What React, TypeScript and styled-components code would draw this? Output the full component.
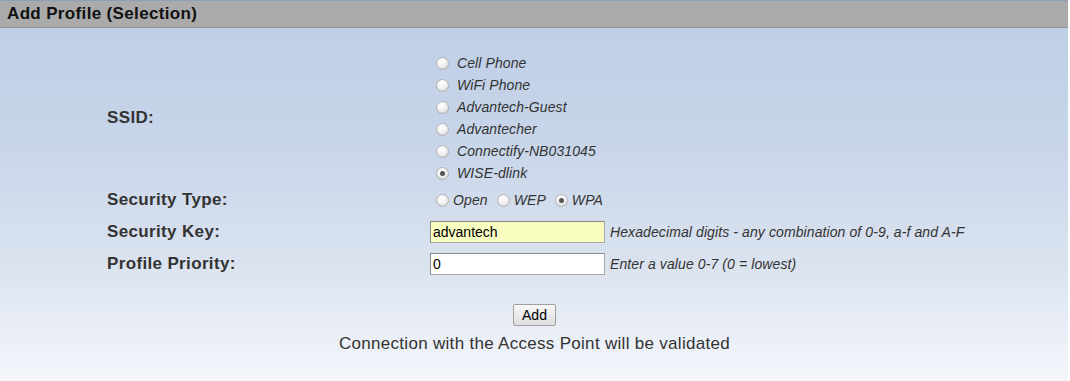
import React, {useState} from "react";
import styled, {createGlobalStyle} from "styled-components";

const ssids = [
    "Cell Phone",
    "WiFi Phone",
    "Advantech-Guest",
    "Advantecher",
    "Connectify-NB031045",
    "WISE-dlink",
];

const securityTypes = ["Open", "WEP", "WPA"];

const App: React.FC = () => {
    const [ssid, setSsid] = useState("WISE-dlink");
    const [security, setSecurity] = useState("WPA");
    const [key, setKey] = useState("advantech");
    const [priority, setPriority] = useState("0");

    return (
        <Page>
            <GlobalStyle/>
            <Header>Add Profile (Selection)</Header>
            <Body>
                <Form>
                    <Label>SSID:</Label>
                    <SsidList>
                        {ssids.map(name => (
                            <SsidItem key={name}>
                                <Radio
                                    type="radio"
                                    name="ssid"
                                    checked={ssid === name}
                                    onChange={() => setSsid(name)}
                                />
                                <OptionText>{name}</OptionText>
                            </SsidItem>
                        ))}
                    </SsidList>

                    <Label>Security Type:</Label>
                    <Cell $height={32}>
                        {securityTypes.map(type => (
                            <InlineOption key={type}>
                                <Radio
                                    type="radio"
                                    name="security"
                                    $inline
                                    checked={security === type}
                                    onChange={() => setSecurity(type)}
                                />
                                <OptionText>{type}</OptionText>
                            </InlineOption>
                        ))}
                    </Cell>

                    <Label>Security Key:</Label>
                    <Cell $height={32}>
                        <TextInput $highlight value={key} onChange={e => setKey(e.target.value)}/>
                        <Hint>Hexadecimal digits - any combination of 0-9, a-f and A-F</Hint>
                    </Cell>

                    <Label>Profile Priority:</Label>
                    <Cell $height={31}>
                        <TextInput value={priority} onChange={e => setPriority(e.target.value)}/>
                        <Hint>Enter a value 0-7 (0 = lowest)</Hint>
                    </Cell>
                </Form>

                <Footer>
                    <Button>Add</Button>
                    <Note>Connection with the Access Point will be validated</Note>
                </Footer>
            </Body>
        </Page>
    );
}

export default App;

const GlobalStyle = createGlobalStyle`
  html, body {
    margin: 0;
    padding: 0;
    background: #ffffff;
  }

  body {
    font-family: "Liberation Sans", Arial, sans-serif;
  }
`;

const Page = styled.div`
  width: 1068px;
  height: 381px;
  display: flex;
  flex-direction: column;
  background: linear-gradient(to bottom, #bccde5 0%, #c9d6ea 40%, #dbe3ef 70%, #f4f6fb 100%);
`;

const Header = styled.div`
  height: 26px;
  line-height: 26px;
  padding-left: 7px;
  background: #aaaaaa;
  border-top: 1px solid #8ea0b8;
  border-bottom: 1px solid #969696;
  font-size: 17px;
  letter-spacing: 0.35px;
  font-weight: bold;
  color: #111111;
`;

const Body = styled.div`
  flex: 1;
  display: flex;
  flex-direction: column;
  padding-top: 24px;
`;

const Form = styled.div`
  display: grid;
  grid-template-columns: 323px 1fr;
  padding-left: 107px;
  align-items: center;
`;

const Label = styled.div`
  font-size: 17px;
  letter-spacing: 0.35px;
  font-weight: bold;
  color: #333333;
`;

const SsidList = styled.div`
  display: flex;
  flex-direction: column;
`;

const SsidItem = styled.label`
  display: flex;
  align-items: center;
  height: 22px;
`;

const Cell = styled.div<{ $height: number }>`
  display: flex;
  align-items: center;
  height: ${p => p.$height}px;
`;

const InlineOption = styled.label`
  display: flex;
  align-items: center;
  margin-right: 3px;
`;

const Radio = styled.input<{ $inline?: boolean }>`
  appearance: none;
  width: 13px;
  height: 13px;
  margin: 0 ${p => p.$inline ? 4 : 8}px 0 6px;
  border-radius: 50%;
  border: 1px solid #b4b4b4;
  background: radial-gradient(circle at 40% 30%, #ffffff 0%, #f2f2f2 45%, #d6d6d6 100%);
  box-shadow: inset 0 -1px 1px rgba(0, 0, 0, 0.06);
  position: relative;
  flex-shrink: 0;

  &:checked::after {
    content: "";
    position: absolute;
    left: 3px;
    top: 3px;
    width: 5px;
    height: 5px;
    border-radius: 50%;
    background: #555555;
  }
`;

const OptionText = styled.span`
  font-size: 14px;
  letter-spacing: 0.1px;
  font-style: italic;
  color: #333333;
`;

const TextInput = styled.input<{ $highlight?: boolean }>`
  box-sizing: border-box;
  width: 175px;
  height: 22px;
  margin: 0;
  padding: 1px 2px;
  font-family: "Liberation Sans", Arial, sans-serif;
  font-size: 14px;
  color: #000000;
  background: ${p => p.$highlight ? "#fafdc0" : "#ffffff"};
  border: 1px solid #a9a9a9;
  border-top-color: #8a8a8a;
  border-left-color: #8a8a8a;
  border-radius: 0;
  outline: none;
`;

const Hint = styled.span`
  margin-left: 5px;
  font-size: 14px;
  letter-spacing: 0.1px;
  font-style: italic;
  color: #333333;
`;

const Footer = styled.div`
  display: flex;
  flex-direction: column;
  align-items: center;
  padding-top: 25px;
  padding-left: 1px;
`;

const Button = styled.button`
  width: 43px;
  height: 22px;
  padding: 0;
  font-family: "Liberation Sans", Arial, sans-serif;
  font-size: 14px;
  color: #000000;
  background: linear-gradient(to bottom, #f8f8f8, #dddddd);
  border: 1px solid #a0a0a0;
  border-radius: 2px;
`;

const Note = styled.div`
  margin-top: 8px;
  font-size: 17px;
  letter-spacing: 0.3px;
  color: #333333;
`;
